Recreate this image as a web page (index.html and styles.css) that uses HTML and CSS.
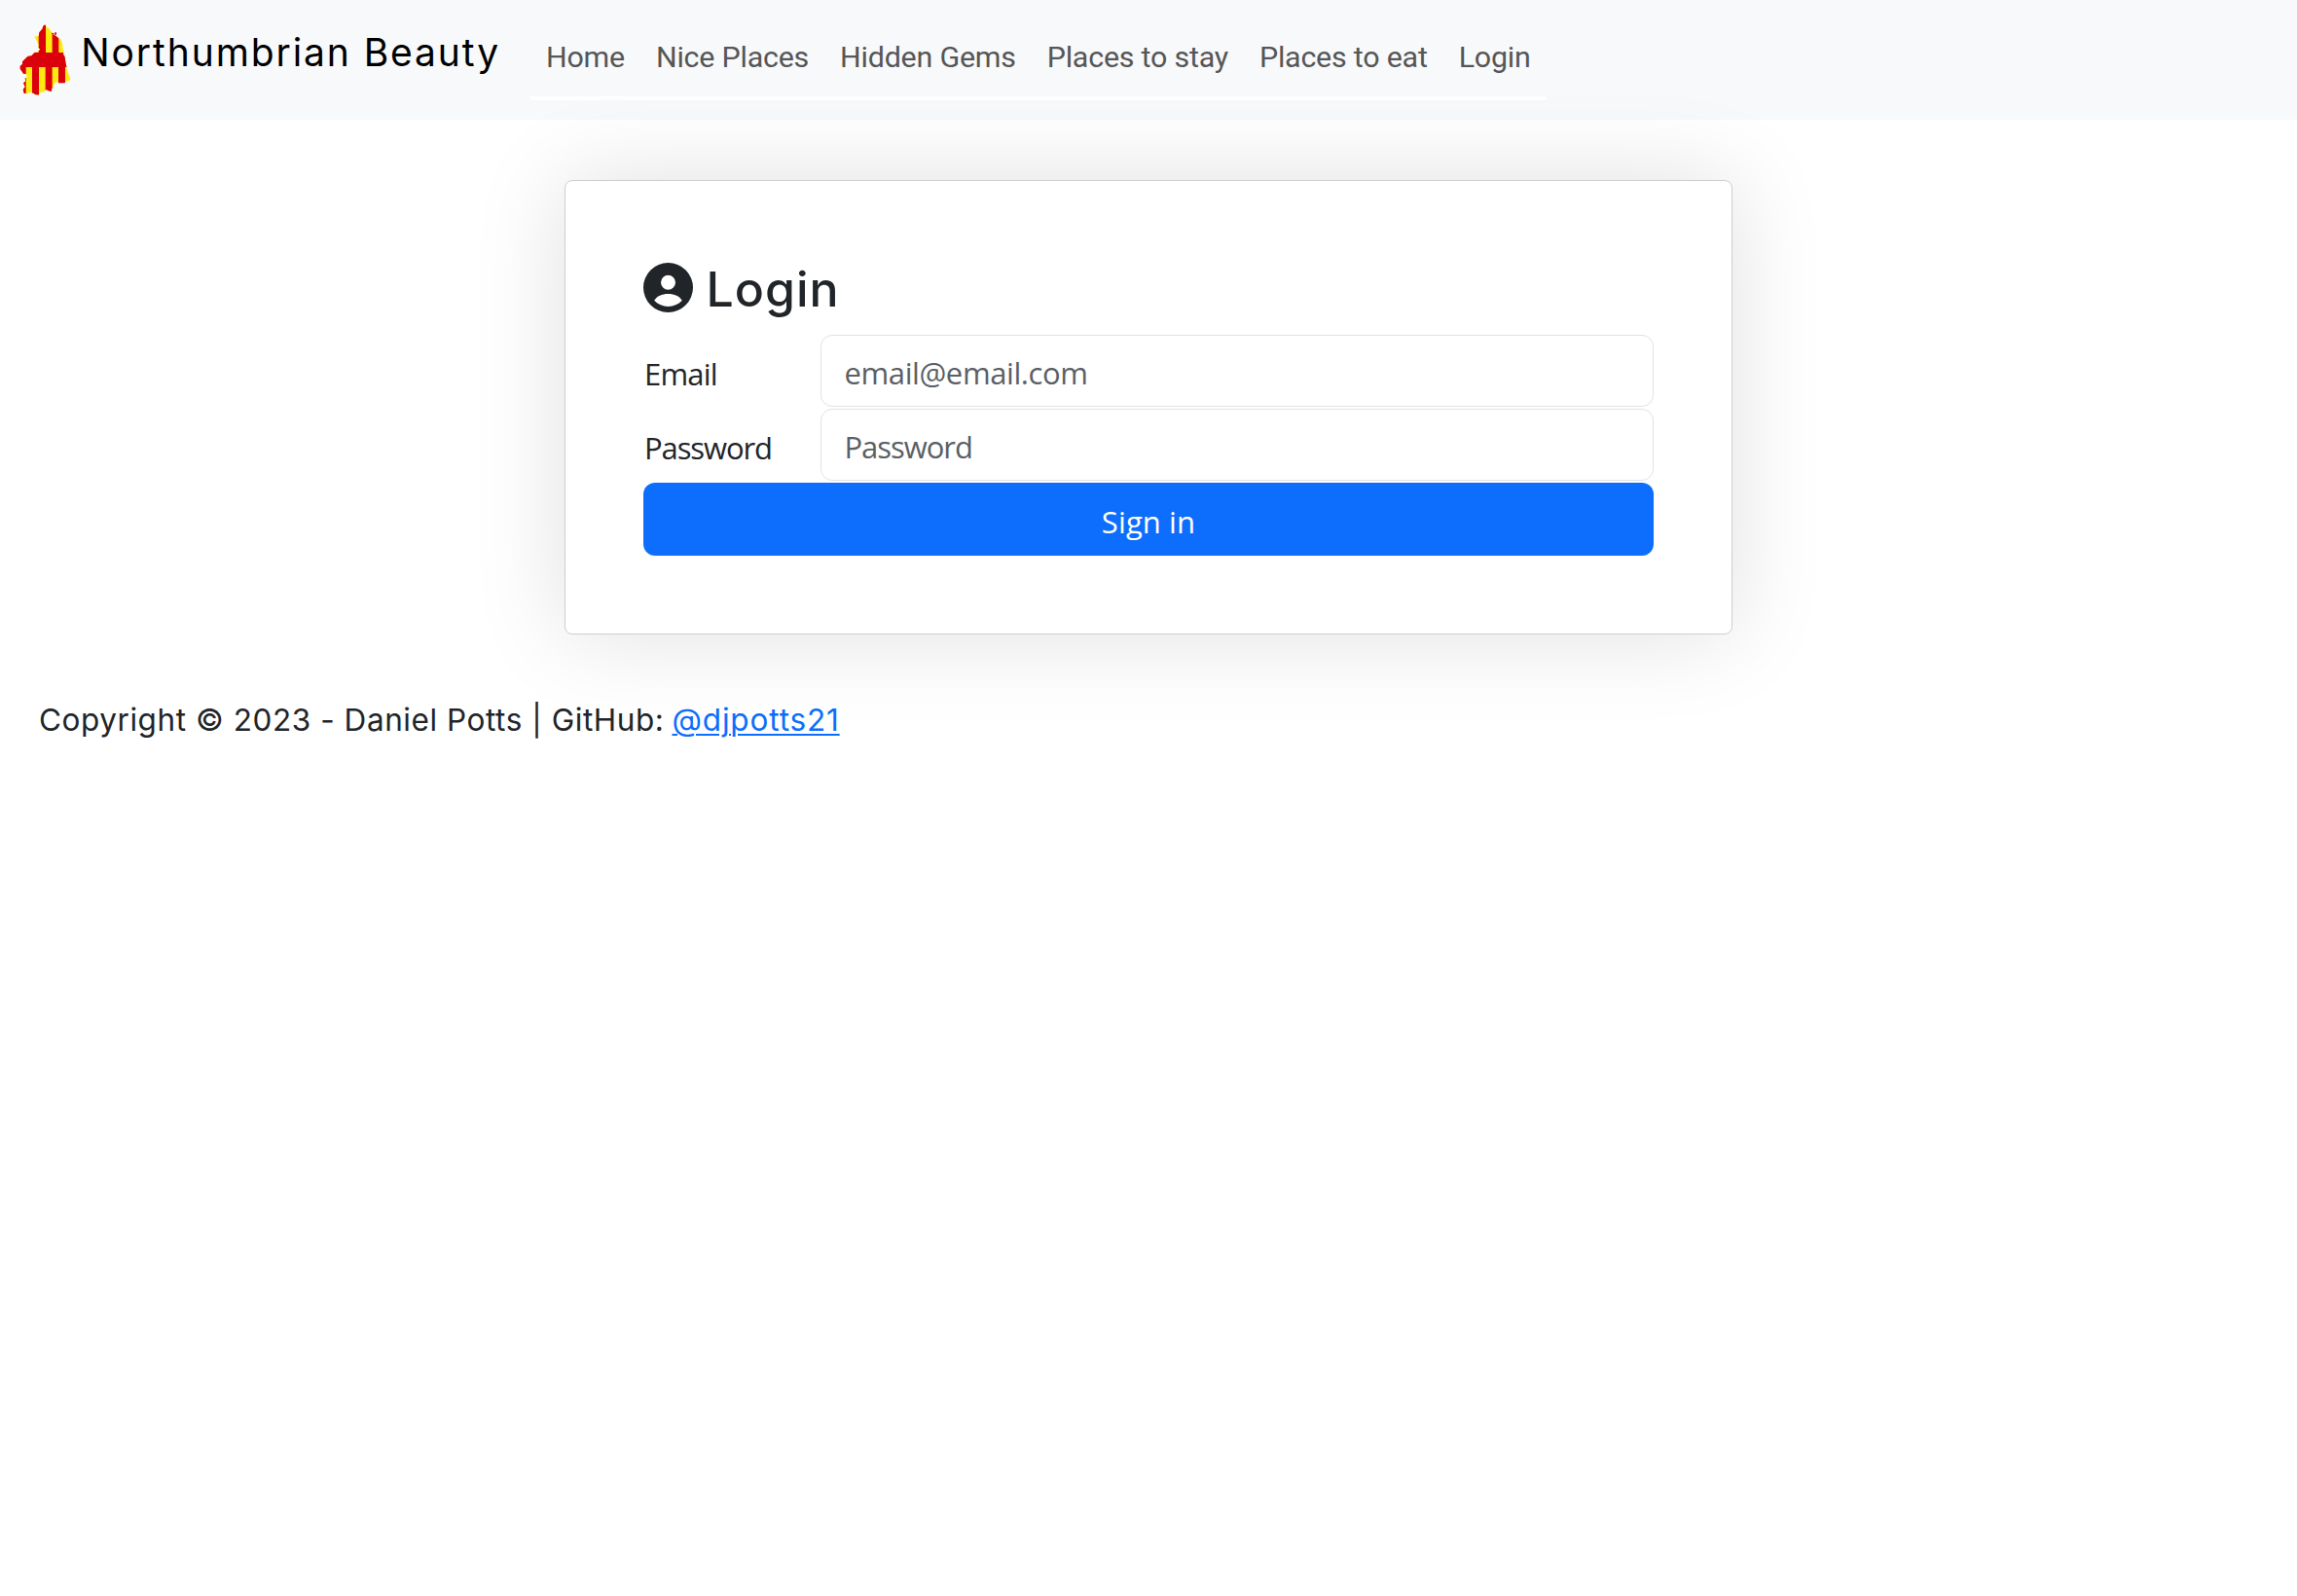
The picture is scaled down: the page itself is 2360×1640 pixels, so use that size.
FILE: index.html
```html
<!DOCTYPE html>
<html lang="en">
<head>
<meta charset="utf-8">
<title>Northumbrian Beauty</title>
<link rel="stylesheet" href="styles.css">
</head>
<body>
<header class="navbar">
  <a class="brand">
    <svg class="logo" viewBox="60 76 160 222" aria-hidden="true">
      <defs><clipPath id="county"><path d="M139 77L144 85L151 88L154 94L162 102L165 108L172 111L180 118L187 122L192 134L194 150L197 160L195 168L200 176L202 190L205 206L208 219L212 231L218 244L214 250L204 251L200 257L181 257L176 252L169 258L164 264L167 270L160 274L159 283L149 281L143 277L134 285L125 286L119 294L109 293L103 288L94 286L84 290L74 289L71 277L77 269L72 257L79 251L77 243L84 237L80 229L72 228L67 221L61 212L62 204L69 199L69 191L78 182L86 174L97 173L107 162L117 159L124 153L117 147L119 139L113 127L106 114L119 112L121 101L130 90L134 80Z"/></clipPath></defs>
      <g clip-path="url(#county)">
        <path fill="#fcea10" d="M60 76h160v222H60z"/>
        <path fill="#da000c" d="M119 76h22v90h-22zM161 76h20v90h-20zM60 163h160v45H60zM60 206h20v92H60zM99 206h21v92H99zM140 206h21v92h-21zM180 206h21v92h-21z"/>
      </g>
      <path fill="#da000c" d="M161 103h5v3h-5zM168 101h6v7h-7v-3h3z"/>
    </svg>
    <span class="brand-name">Northumbrian Beauty</span>
  </a>
  <nav class="links">
    <a>Home</a><a>Nice Places</a><a>Hidden Gems</a><a>Places to stay</a><a>Places to eat</a><a>Login</a>
  </nav>
</header>
<main class="card">
  <h1 class="title">
    <svg class="user" viewBox="0 0 51 51" aria-hidden="true"><path fill="#212529" fill-rule="evenodd" d="M25.5 0a25.5 25.5 0 1 0 0 51a25.5 25.5 0 1 0 0-51zM25.5 12.7a7.5 7.5 0 1 1 0 15a7.5 7.5 0 1 1 0-15zM11.2 38.8C14 34 19 31.9 25.5 31.9S37 34 39.8 38.8C36 42.9 31 44.9 25.5 44.9S15 42.9 11.2 38.8z"/></svg>
    <span class="title-text">Login</span>
  </h1>
  <form class="form">
    <div class="row"><label class="label label-email" for="email">Email</label><input class="field" id="email" type="email" placeholder="email@email.com"></div>
    <div class="row"><label class="label label-password" for="password">Password</label><input class="field field-password" id="password" type="password" placeholder="Password"></div>
    <button class="submit" type="button">Sign in</button>
  </form>
</main>
<footer class="footer"><span class="copy">Copyright © 2023 - Daniel Potts | GitHub:</span><a class="github" href="#">@djpotts21</a></footer>
</body>
</html>
```
FILE: styles.css
```css
* { box-sizing: border-box; }
body { margin: 0; background: #fff; color: #212529; font-family: "Open Sans", "Noto Sans", sans-serif; font-size: 31px; }
.navbar { display: flex; align-items: flex-start; height: 122.7px; padding-left: 20px; background: #f8f9fb; }
.brand { display: flex; width: 525px; color: #000; }
.logo { width: 53.3px; height: 74px; margin-top: 25.3px; flex: none; }
.brand-name { margin: 24px 0 0 10px; font: 400 39px/60px Inter, sans-serif; white-space: nowrap; letter-spacing: 1.9px; }
.links { display: flex; height: 102.5px; border-bottom: 4px solid #fff; width: 1044px; padding: 29px 0 0 16px; gap: 32px; color: #555657; font: 400 30.4px/60px Roboto, sans-serif; letter-spacing: -0.21px; white-space: nowrap; }
.card { position: relative; width: 1200px; height: 467px; margin: 62.6px auto 0; padding: 78px 80px 0; background: #fff; border: 1px solid #cdcecf; border-radius: 8px; box-shadow: 0 0 96px rgba(0, 0, 0, .125); }
.title { display: flex; height: 80px; margin: 0; }
.user { width: 51px; height: 51px; margin-top: 6px; flex: none; }
.title-text { margin-left: 13.5px; font: 500 50px/67px Inter, sans-serif; letter-spacing: 1px; }
.form { display: flex; flex-direction: column; gap: 2px; }
.row { display: flex; height: 74px; }
.label { width: 182px; padding-left: 1px; line-height: 80px; flex: none; }
.label-email { letter-spacing: -0.8px; }
.label-password { letter-spacing: -1.1px; }
.field { flex: 1; min-width: 0; height: 74px; padding: 4px 24px 0 23.5px; border: 1px solid #dee2e6; border-radius: 12px; background: #fff; font: inherit; letter-spacing: -0.4px; outline: 0; }
.field-password { letter-spacing: -1.05px; }
.field::placeholder { color: #5b6065; opacity: 1; }
.submit { height: 74.5px; padding: 4px 0 0; border: 0; border-radius: 12px; background: #0d6efd; color: #fff; font: inherit; letter-spacing: 0.1px; }
.footer { display: flex; gap: 8px; padding: 61px 40px 0; font: 400 31.5px/54px Inter, sans-serif; white-space: nowrap; }
.copy { letter-spacing: 0.56px; }
.github { color: #0d6efd; letter-spacing: 0.85px; text-decoration: underline; text-decoration-thickness: 2px; text-underline-offset: 3px; }
```
